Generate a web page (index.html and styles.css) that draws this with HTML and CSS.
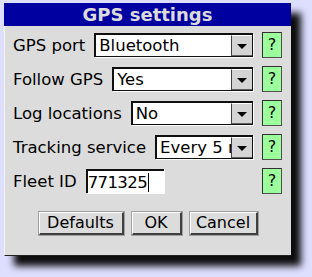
FILE: index.html
```html
<!DOCTYPE html>
<html>
<head>
<meta charset="utf-8">
<link rel="stylesheet" href="styles.css">
</head>
<body>
<div class="page">
  <div class="dialog">
    <div class="title">GPS settings</div>
    <div class="content">
      <div class="row">
        <span class="label">GPS port</span>
        <div class="select"><span class="value">Bluetooth</span><span class="drop"><span class="tri"></span></span></div>
        <span class="help">?</span>
      </div>
      <div class="row">
        <span class="label">Follow GPS</span>
        <div class="select"><span class="value">Yes</span><span class="drop"><span class="tri"></span></span></div>
        <span class="help">?</span>
      </div>
      <div class="row">
        <span class="label">Log locations</span>
        <div class="select"><span class="value">No</span><span class="drop"><span class="tri"></span></span></div>
        <span class="help">?</span>
      </div>
      <div class="row">
        <span class="label">Tracking service</span>
        <div class="select"><span class="value">Every 5 min</span><span class="drop"><span class="tri"></span></span></div>
        <span class="help">?</span>
      </div>
      <div class="row">
        <span class="label">Fleet ID</span>
        <div class="input"><span class="text">771325</span><span class="caret"></span></div>
        <span class="spacer"></span>
        <span class="help">?</span>
      </div>
      <div class="buttons">
        <span class="btn btn-defaults">Defaults</span>
        <span class="btn btn-ok">OK</span>
        <span class="btn btn-cancel">Cancel</span>
      </div>
    </div>
  </div>
</div>
</body>
</html>
```

FILE: styles.css
```css
html, body {
  margin: 0;
  padding: 0;
  background: #dedeff;
  width: 312px;
  height: 277px;
  overflow: hidden;
}

.page {
  padding: 3px 0 0 4px;
}

.dialog {
  width: 287px;
  height: 253px;
  box-sizing: border-box;
  background: #dcdcdc;
  box-shadow: 10px 10px 7px rgba(0, 0, 0, 0.95);
  display: flex;
  flex-direction: column;
  font-family: "DejaVu Sans", Verdana, sans-serif;
  font-size: 16.5px;
  color: #000;
}

.title {
  height: 23px;
  line-height: 23px;
  background: #0000a0;
  color: #dcdcdc;
  font-weight: bold;
  font-size: 18px;
  text-align: center;
}

.content {
  flex: 1;
  border-left: 1px solid #f4f4f4;
  border-bottom: 1px solid #202020;
  padding: 6px 9px 0 8px;
  display: flex;
  flex-direction: column;
  gap: 8px;
}

.row {
  height: 26px;
  display: flex;
  align-items: center;
  gap: 9px;
}

.label {
  white-space: nowrap;
  line-height: 24px;
  padding-top: 1px;
}

.select {
  flex: 1;
  min-width: 0;
  height: 24px;
  box-sizing: border-box;
  background: #fff;
  border-top: 2px solid #101010;
  border-left: 2px solid #101010;
  border-right: 1px solid #101010;
  border-bottom: 1px solid #101010;
  box-shadow: 1px 1px 0 #ffffff;
  display: flex;
  align-items: stretch;
  overflow: hidden;
}

.value {
  flex: 1;
  min-width: 0;
  overflow: hidden;
  white-space: nowrap;
  text-overflow: clip;
  padding-left: 3px;
  line-height: 22px;
}

.drop {
  flex: none;
  width: 21px;
  box-sizing: border-box;
  background: #d4d4d4;
  border-left: 1px solid #404040;
  border-top: 1px solid #ffffff;
  border-bottom: 1px solid #606060;
  display: flex;
  align-items: center;
  justify-content: center;
}

.tri {
  width: 0;
  height: 0;
  border-left: 5px solid transparent;
  border-right: 5px solid transparent;
  border-top: 5px solid #000;
  margin-top: 1px;
}

.help {
  flex: none;
  width: 20px;
  height: 26px;
  box-sizing: border-box;
  background: #9cff9c;
  border: 1px solid #303030;
  border-right-color: #505050;
  border-bottom-color: #505050;
  text-align: center;
  line-height: 24px;
  font-size: 16px;
}

.input {
  width: 78px;
  height: 24px;
  box-sizing: border-box;
  background: #fff;
  border-top: 2px solid #101010;
  border-left: 2px solid #101010;
  box-shadow: 1px 1px 0 #ffffff;
  display: flex;
  align-items: center;
  letter-spacing: -0.6px;
}

.caret {
  width: 1px;
  height: 19px;
  background: #000;
  margin-left: 1px;
}

.spacer {
  flex: 1;
}

.buttons {
  margin-top: 10px;
  display: flex;
  justify-content: center;
  gap: 8px;
  padding-left: 1px;
}

.btn {
  height: 23px;
  box-sizing: border-box;
  background: #dcdcdc;
  border-top: 1px solid #ffffff;
  border-left: 1px solid #ffffff;
  border-right: 2px solid #404040;
  border-bottom: 2px solid #404040;
  outline: 1px solid #a0a0a0;
  text-align: center;
  line-height: 20px;
  font-size: 16px;
}

.btn-defaults { width: 85px; }
.btn-ok { width: 50px; }
.btn-cancel { width: 68px; }
```
